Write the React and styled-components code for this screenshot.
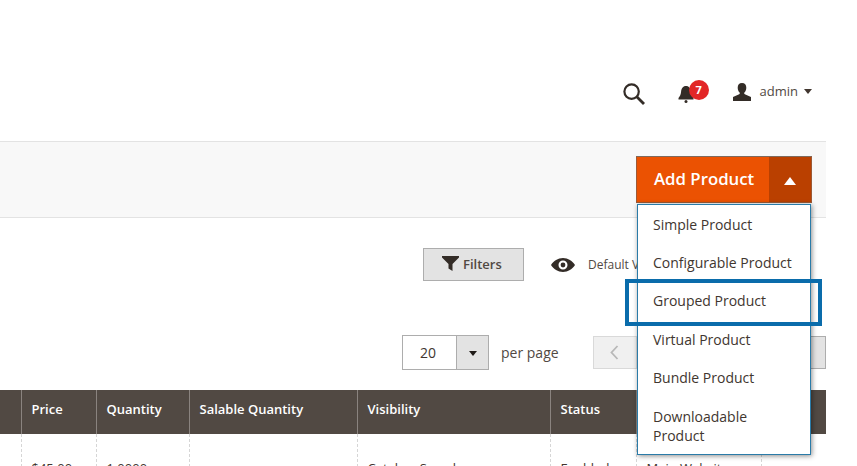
import React from 'react';
import styled, { createGlobalStyle } from 'styled-components';

const columns = [
  { label: '', width: 21 },
  { label: 'Price', width: 75, value: '$45.00' },
  { label: 'Quantity', width: 93, value: '1.0000' },
  { label: 'Salable Quantity', width: 168, value: '' },
  { label: 'Visibility', width: 193, value: 'Catalog, Search' },
  { label: 'Status', width: 86, value: 'Enabled' },
  { label: 'Websites', width: 125, value: 'Main Website' },
  { label: 'Action', width: 65, value: '' },
];

const productTypes = [
  'Simple Product',
  'Configurable Product',
  'Grouped Product',
  'Virtual Product',
  'Bundle Product',
  'Downloadable Product',
];

const GlobalStyle = createGlobalStyle`
  html, body {
    margin: 0;
    height: 466px;
    overflow: hidden;
    background: #fff;
    font-family: "Open Sans", "Liberation Sans", sans-serif;
    color: #41362f;
  }
`;

const Page = styled.div`
  width: 826px;
  height: 466px;
  overflow: hidden;
`;

const Header = styled.header`
  height: 141px;
  box-sizing: border-box;
  padding: 80px 14px 0 0;
  display: flex;
  justify-content: flex-end;
  align-items: flex-start;
`;

const IconSlot = styled.div`
  position: relative;
  display: flex;
  margin-right: ${(p) => p.$gap}px;
  margin-top: ${(p) => p.$top}px;
`;

const Badge = styled.span`
  position: absolute;
  left: 11px;
  top: -5px;
  width: 20px;
  height: 20px;
  border-radius: 50%;
  background: #e22626;
  color: #fff;
  font-size: 11px;
  font-weight: 700;
  line-height: 20px;
  text-align: center;
`;

const UserName = styled.span`
  font-size: 13px;
  line-height: 22px;
  color: #514943;
  margin-right: 6px;
`;

const Caret = styled.span`
  width: 0;
  height: 0;
  margin-top: 9px;
  border-left: 4px solid transparent;
  border-right: 4px solid transparent;
  border-top: 5px solid #41362f;
`;

const ActionBar = styled.div`
  height: 77px;
  box-sizing: border-box;
  padding: 14px 14px 0 0;
  display: flex;
  justify-content: flex-end;
  align-items: flex-start;
  background: #f8f8f8;
  border-top: 1px solid #e3e3e3;
  border-bottom: 1px solid #e3e3e3;
`;

const SplitButton = styled.div`
  position: relative;
  display: flex;
  width: 176px;
  height: 47px;
  box-sizing: border-box;
  border: 1px solid #9c5a36;
  border-top-color: #7d6a5e;
  background: #eb5202;
`;

const MainAction = styled.div`
  width: 132px;
  box-sizing: border-box;
  padding-left: 17px;
  color: #fff;
  font-size: 16.8px;
  font-weight: 600;
  line-height: 43px;
  white-space: nowrap;
`;

const Toggle = styled.div`
  flex: 1;
  display: flex;
  align-items: center;
  justify-content: center;
  background: #ba4000;
`;

const ArrowUp = styled.span`
  width: 0;
  height: 0;
  border-left: 6px solid transparent;
  border-right: 6px solid transparent;
  border-bottom: 8px solid #fff;
  margin-top: 3px;
`;

const Menu = styled.ul`
  position: absolute;
  z-index: 2;
  left: 0;
  top: 47px;
  width: 174px;
  box-sizing: border-box;
  margin: 0;
  padding: 0;
  list-style: none;
  background: #fff;
  border: 1px solid #2a7ba8;
  box-shadow: 1px 1px 5px rgba(0, 0, 0, 0.45);
`;

const MenuItem = styled.li`
  padding: 9.7px 15px;
  font-size: 14px;
  line-height: 19px;
  color: #41362f;
`;

const Highlight = styled.div`
  position: absolute;
  z-index: 3;
  left: -12px;
  top: 122px;
  width: 197px;
  height: 47px;
  box-sizing: border-box;
  border: 4px solid #0a6cab;
`;

const ToolbarRow = styled.div`
  display: flex;
  align-items: center;
  padding-left: ${(p) => p.$left}px;
  padding-top: ${(p) => p.$top}px;
`;

const FilterButton = styled.div`
  width: 101px;
  height: 33px;
  box-sizing: border-box;
  display: flex;
  align-items: center;
  gap: 4px;
  padding: 0 0 2px 18px;
  background: #e3e3e3;
  border: 1px solid #adadad;
  font-size: 13px;
  font-weight: 600;
  color: #514943;
`;

const ViewSwitch = styled.div`
  display: flex;
  align-items: center;
  gap: 13px;
  margin-left: 27px;
  font-size: 12px;
  color: #514943;
  white-space: nowrap;
`;

const PageSize = styled.div`
  display: flex;
  width: 87px;
  height: 35px;
  box-sizing: border-box;
  border: 1px solid #adadad;
`;

const SizeValue = styled.div`
  width: 53px;
  box-sizing: border-box;
  padding-left: 17px;
  font-size: 14px;
  line-height: 33px;
  color: #41362f;
`;

const SizeToggle = styled.div`
  flex: 1;
  display: flex;
  align-items: center;
  justify-content: center;
  background: #e3e3e3;
  border-left: 1px solid #adadad;
`;

const SizeCaret = styled(Caret)`
  margin-top: 1px;
  border-top-color: #1f1a17;
`;

const PerPage = styled.span`
  margin-left: 12px;
  font-size: 14px;
  color: #514943;
`;

const Pager = styled.div`
  display: flex;
  margin-left: auto;
  width: 233px;
  justify-content: space-between;
`;

const PagerButton = styled.div`
  width: 44px;
  height: 33px;
  display: flex;
  align-items: center;
  justify-content: center;
  box-sizing: border-box;
  padding-right: 2px;
  background: ${(p) => (p.$disabled ? '#f0f0f0' : '#e3e3e3')};
  border: 1px solid ${(p) => (p.$disabled ? '#d9d9d9' : '#adadad')};
`;

const Table = styled.table`
  margin-top: 20px;
  width: 826px;
  table-layout: fixed;
  border-collapse: collapse;
`;

const HeadCell = styled.th`
  height: 44px;
  box-sizing: border-box;
  padding: 0 10px 6px;
  background: #514943;
  border-left: 1px solid #8a837f;
  color: #fff;
  font-size: 13px;
  font-weight: 600;
  text-align: left;
  white-space: nowrap;
  &:first-child { border-left: 0; }
`;

const BodyCell = styled.td`
  padding: 25px 10px 10px;
  border-left: 1px dashed #d6d6d6;
  font-size: 13px;
  line-height: 18px;
  color: #41362f;
  white-space: nowrap;
  vertical-align: top;
  &:first-child { border-left: 0; }
  &:last-child { border-right: 1px solid #d6d6d6; }
`;

const App = () => {
  return (
    <Page>
      <GlobalStyle />
      <Header>
        <IconSlot $gap={33} $top={3}>
          <svg width="22" height="22" viewBox="0 0 22 22" fill="none" stroke="#332c27" strokeWidth="2.2">
            <circle cx="8.6" cy="8.6" r="7.2" />
            <path d="M13.8 13.8 21 21" strokeWidth="2.8" />
          </svg>
        </IconSlot>
        <IconSlot $gap={38} $top={5}>
          <svg width="16" height="18" viewBox="0 0 16 18" fill="#332c27">
            <path d="M8 1c3.2 0 4.6 2.6 4.9 5.6.3 3 1 4.6 2.6 6.4v1.4H.5V13c1.6-1.8 2.3-3.4 2.6-6.4C3.4 3.6 4.8 1 8 1Z" />
            <circle cx="8" cy="16.4" r="1.5" />
          </svg>
          <Badge>7</Badge>
        </IconSlot>
        <IconSlot $gap={8} $top={3}>
          <svg width="20" height="18" viewBox="0 0 20 18" fill="#332c27">
            <path d="M10 0c2.9 0 4.3 2 4.3 4.8 0 2-.8 3.8-1.9 4.8-.4.5-.3 1.300.4 1.700L19 14v4H1v-4l6.200-2.700c.7-.4.8-1.200.4-1.700C6.500 8.600 5.700 6.800 5.700 4.800 5.700 2 7.100 0 10 0Z" />
          </svg>
        </IconSlot>
        <UserName>admin</UserName>
        <Caret />
      </Header>

      <ActionBar>
        <SplitButton>
          <MainAction>Add Product</MainAction>
          <Toggle>
            <ArrowUp />
          </Toggle>
          <Menu>
            {productTypes.map((type) => (
              <MenuItem key={type}>{type}</MenuItem>
            ))}
          </Menu>
          <Highlight />
        </SplitButton>
      </ActionBar>

      <ToolbarRow $left={423} $top={30}>
        <FilterButton>
          <svg width="17" height="15" viewBox="0 0 17 15" fill="#332c27">
            <path d="M0 0h17v1.500L10.500 8v7L6.500 12.500V8L0 1.500Z" />
          </svg>
          Filters
        </FilterButton>
        <ViewSwitch>
          <svg width="24" height="14" viewBox="0 0 24 14">
            <path fill="#332c27" fillRule="evenodd" d="M12 0c5 0 9.500 3 12 7-2.500 4-7 7-12 7S2.500 11 0 7c2.500-4 7-7 12-7Zm0 2.500a4.500 4.500 0 1 0 0 9 4.500 4.500 0 0 0 0-9Z" />
            <circle cx="12" cy="7" r="2.400" fill="#332c27" />
          </svg>
          Default View
        </ViewSwitch>
      </ToolbarRow>

      <ToolbarRow $left={402} $top={54}>
        <PageSize>
          <SizeValue>20</SizeValue>
          <SizeToggle>
            <SizeCaret />
          </SizeToggle>
        </PageSize>
        <PerPage>per page</PerPage>
        <Pager>
          <PagerButton $disabled>
            <svg width="9" height="15" viewBox="0 0 9 15" fill="none" stroke="#b8b8b8" strokeWidth="1.800">
              <path d="M7.500 1 1.500 7.500l6 6.500" />
            </svg>
          </PagerButton>
          <PagerButton />
        </Pager>
      </ToolbarRow>

      <Table>
        <colgroup>
          {columns.map((col) => (
            <col key={col.label} style={{ width: col.width }} />
          ))}
        </colgroup>
        <thead>
          <tr>
            {columns.map((col) => (
              <HeadCell key={col.label}>{col.label}</HeadCell>
            ))}
          </tr>
        </thead>
        <tbody>
          <tr>
            {columns.map((col) => (
              <BodyCell key={col.label}>{col.value}</BodyCell>
            ))}
          </tr>
        </tbody>
      </Table>
    </Page>
  );
};

export default App;
